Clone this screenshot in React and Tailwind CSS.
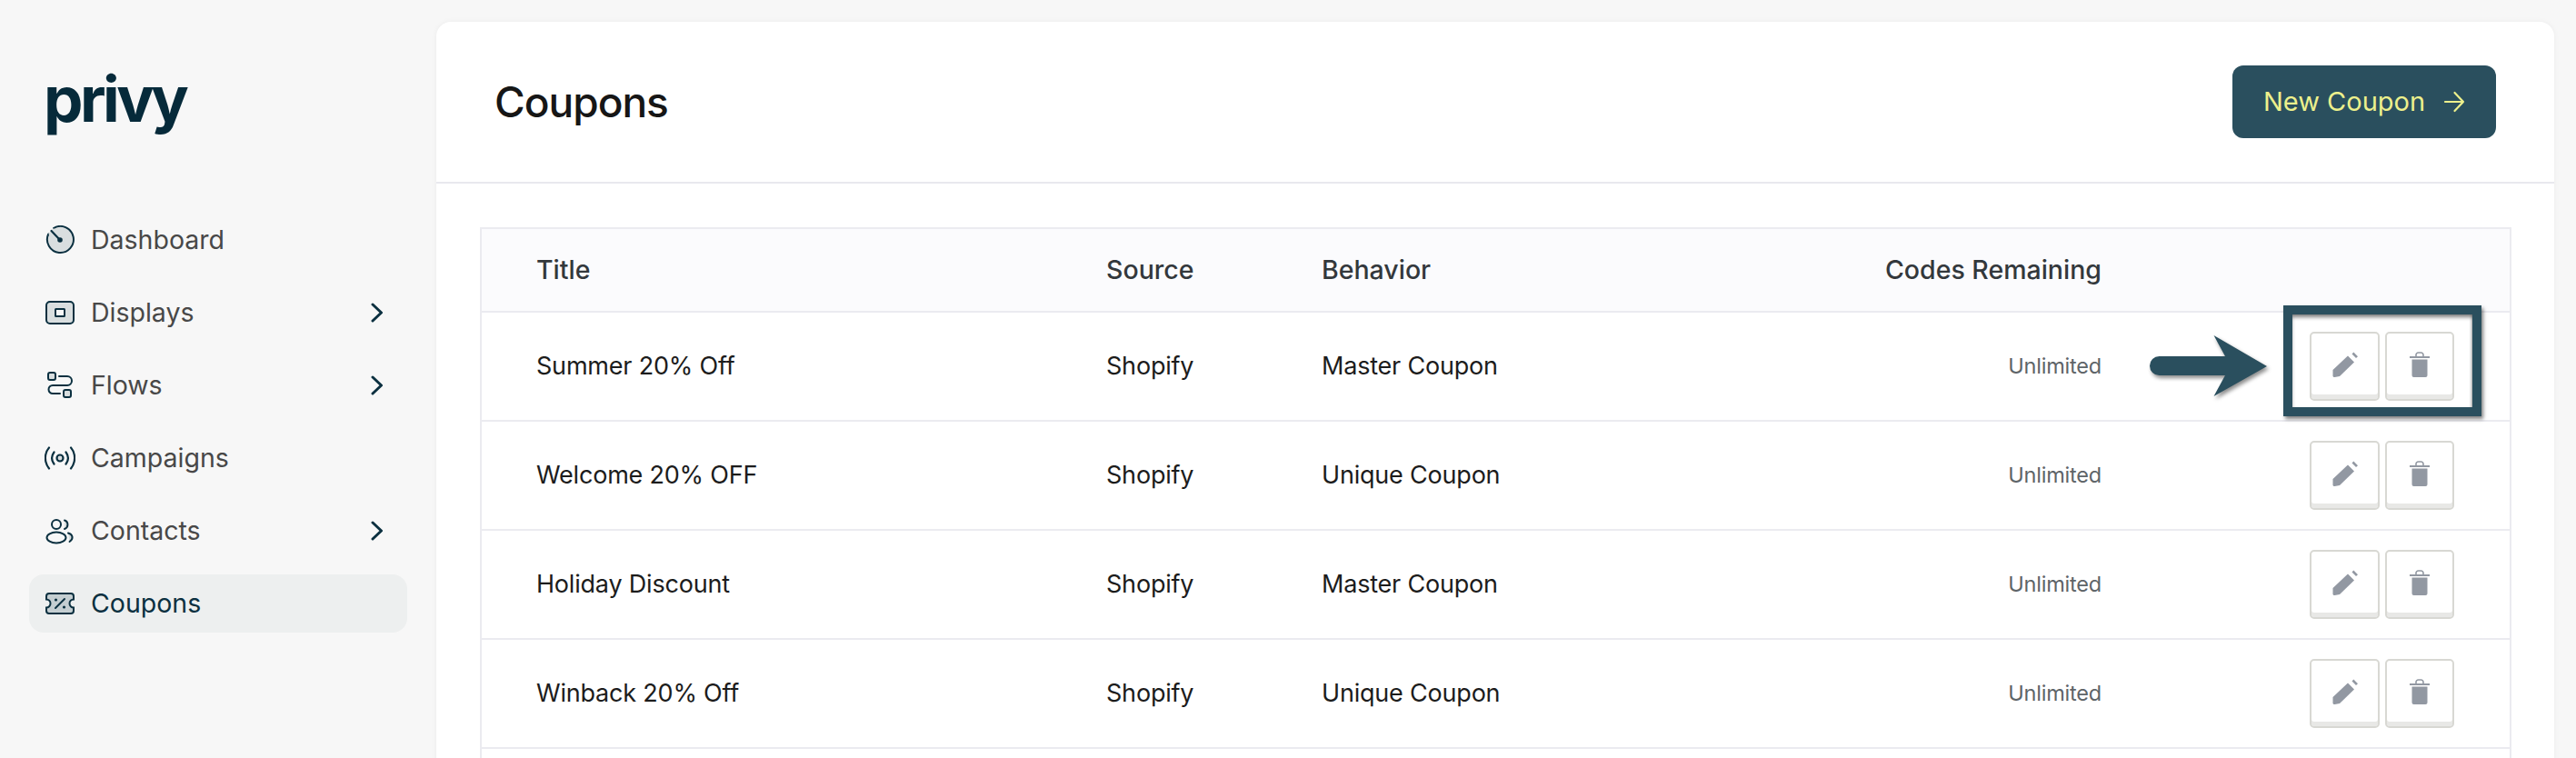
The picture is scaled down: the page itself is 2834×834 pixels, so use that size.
const F = { fontFamily: 'Inter, "Liberation Sans", sans-serif' };

function Dash() {
  return (
    <svg width="32" height="32" viewBox="0 0 32 32" fill="none" stroke="#0b3040" strokeWidth="2" strokeLinecap="round">
      <path d="M9 3A14.500 14.500 0 1 1 3.200 9.500" fill="#d9dedf" />
      <path d="M3.200 9.500 16 16 9 3Z" fill="#d9dedf" stroke="none" />
      <path d="M6.500 6 16 16" strokeWidth="2.200" />
      <circle cx="16" cy="16" r="2.800" fill="#0b3040" stroke="none" />
    </svg>
  );
}
function Disp() {
  return (
    <svg width="32" height="32" viewBox="0 0 32 32" fill="none" stroke="#0b3040" strokeWidth="2">
      <rect x="1" y="4" width="30" height="24" rx="4" fill="#d9dedf" />
      <rect x="11" y="12" width="10" height="8" rx="0.500" fill="#f7f7f7" />
    </svg>
  );
}
function Flow() {
  return (
    <svg width="32" height="32" viewBox="0 0 32 32" fill="none" stroke="#0b3040" strokeWidth="2" strokeLinecap="round">
      <rect x="3" y="2" width="8" height="8" rx="2" fill="#d9dedf" />
      <rect x="20" y="21" width="8" height="8" rx="2" fill="#d9dedf" />
      <path d="M15 6h9a4.500 4.500 0 0 1 0 10H8a4.500 4.500 0 0 0 0 9h8" />
    </svg>
  );
}
function Camp() {
  return (
    <svg width="34" height="32" viewBox="0 0 34 32" fill="none" stroke="#0b3040" strokeWidth="2.200" strokeLinecap="round">
      <circle cx="17" cy="16" r="3.500" fill="#d9dedf" />
      <path d="M10.500 9.500c-3 4-3 9 0 13M23.500 9.500c3 4 3 9 0 13M5 4.500c-5.500 6.500-5.500 16 0 23M29 4.500c5.500 6.500 5.500 16 0 23" />
    </svg>
  );
}
function Cont() {
  return (
    <svg width="32" height="32" viewBox="0 0 32 32" fill="none" stroke="#0b3040" strokeWidth="2" strokeLinecap="round">
      <path d="M21 4.500a5 5 0 0 1 0 9.500Z" fill="#d9dedf" stroke="none" />
      <path d="M25 18.500c5 1.500 6.500 6 1.500 9.500Z" fill="#d9dedf" stroke="none" />
      <circle cx="12" cy="9" r="5" />
      <ellipse cx="12" cy="23.500" rx="10.500" ry="6" />
      <path d="M21 4.500a5 5 0 0 1 0 9.500M25 18.500c5 1.500 6.500 6 1.500 9.500" />
    </svg>
  );
}
function Coup() {
  return (
    <svg width="32" height="32" viewBox="0 0 32 32" fill="none" stroke="#0b3040" strokeWidth="2" strokeLinecap="round">
      <path d="M4 5h24a3 3 0 0 1 3 3v3.500a4.500 4.500 0 0 0 0 9V24a3 3 0 0 1-3 3H4a3 3 0 0 1-3-3v-3.500a4.500 4.500 0 0 0 0-9V8a3 3 0 0 1 3-3Z" fill="#c4ced1" />
      <path d="M11 21 21 11" />
      <circle cx="11.500" cy="12" r="1.600" fill="#0b3040" stroke="none" />
      <circle cx="20.500" cy="20" r="1.600" fill="#0b3040" stroke="none" />
    </svg>
  );
}
function Chev() {
  return (
    <svg width="14" height="22" viewBox="0 0 14 22" fill="none" stroke="#0b3040" strokeWidth="3" strokeLinecap="round" strokeLinejoin="round">
      <path d="M2 2l9.500 9L2 20" />
    </svg>
  );
}
function Pencil() {
  return (
    <svg width="28" height="28" viewBox="0 0 28 28" fill="#9298a2">
      <path d="M0.500 20 17 4.500 24 11.500 8 27 2.500 28H1.500L0.500 27Z" />
      <path d="M21.500 2.500 23.300 0.500 28 5.200 26 7Z" />
    </svg>
  );
}
function Trash() {
  return (
    <svg width="22" height="28" viewBox="0 0 22 28" fill="#9298a2">
      <rect x="0" y="5" width="22" height="2" />
      <path d="M7 5V3.500A2.500 2.500 0 0 1 9.500 1h3A2.500 2.500 0 0 1 15 3.500V5" fill="none" stroke="#9298a2" strokeWidth="1.600" />
      <path d="M2.500 8.500h17V26a2 2 0 0 1-2 2h-13a2 2 0 0 1-2-2Z" />
    </svg>
  );
}
function ArrowCallout() {
  return (
    <svg width="130" height="68" viewBox="0 0 130 68" className="overflow-visible" style={{ filter: 'drop-shadow(2px 3px 2px rgba(0,0,0,.45))' }}>
      <path d="M70.500 0 129 34 70.500 67 83 44H10.500a10.500 10.500 0 0 1 0-21H83Z" fill="#2a4f5e" />
    </svg>
  );
}

const nav = [
  ['Dashboard', Dash, false],
  ['Displays', Disp, true],
  ['Flows', Flow, true],
  ['Campaigns', Camp, false],
  ['Contacts', Cont, true],
];

const rows = [
  ['Summer 20% Off', 'Master Coupon'],
  ['Welcome 20% OFF', 'Unique Coupon'],
  ['Holiday Discount', 'Master Coupon'],
  ['Winback 20% Off', 'Unique Coupon'],
  ['', ''],
];

function IconBtn({ children, w }) {
  return (
    <div className={`${w} h-[76px] rounded-[5px] border-2 border-[#d8d8d3] bg-white flex items-center justify-center shadow-[inset_0_-5px_0_#e8e8e6] pb-[4px]`}>
      {children}
    </div>
  );
}

export default function App() {
  return (
    <div className="h-[834px] w-[2834px] overflow-hidden bg-[#f7f7f7] flex" style={F}>
      <aside className="w-[480px] shrink-0 pl-[32px] pr-[32px] flex flex-col">
        <div className="h-[200px] pl-[16px] pt-[69px]">
          <div className="text-[69px] leading-[80px] font-bold tracking-[-3.500px] text-[#062a3a]">privy</div>
        </div>
        <nav className="mt-[32px] flex flex-col">
          {nav.map(([label, Icon, more]) => (
            <div key={label} className="h-[64px] mb-[16px] pl-[17px] pr-[26px] flex items-center text-[#484848]">
              <span className="w-[34px] flex justify-center"><Icon /></span>
              <span className="ml-[17px] text-[28.5px] flex-1">{label}</span>
              {more && <Chev />}
            </div>
          ))}
          <div className="h-[64px] pl-[17px] rounded-[16px] bg-[#edefef] flex items-center text-[#0b3040]">
            <span className="w-[34px] flex justify-center"><Coup /></span>
            <span className="ml-[17px] text-[28.5px]">Coupons</span>
          </div>
        </nav>
      </aside>

      <main className="mt-[24px] w-[2330px] shrink-0 h-[900px] bg-white rounded-t-[16px] shadow-[0_0_6px_rgba(0,0,0,.05)]">
        <header className="h-[178px] border-b-2 border-[#e8e8ee] pl-[64px] pr-[64px] flex items-center justify-between">
          <h1 className="text-[46px] font-medium tracking-[-1px] text-[#161616]">Coupons</h1>
          <button className="w-[290px] h-[80px] rounded-[12px] bg-[#2a4f5e] text-[#edf08c] text-[29px] flex items-center justify-center gap-[20px]">
            New Coupon
            <svg width="24" height="24" viewBox="0 0 24 24" fill="none" stroke="#edf08c" strokeWidth="2.200" strokeLinecap="round" strokeLinejoin="round">
              <path d="M2 12h20M12.500 2 22 12 12.500 22" />
            </svg>
          </button>
        </header>

        <div className="mt-[48px] ml-[48px] w-[2235px] border-2 border-[#ebebf0]">
          <div className="h-[92px] bg-[#fbfbfd] border-b-2 border-[#ebebf0] flex items-center text-[28.5px] font-medium text-[#33383c]">
            <span className="ml-[60px] w-[627px]">Title</span>
            <span className="w-[237px]">Source</span>
            <span className="w-[500px]">Behavior</span>
            <span className="w-[358px] text-right">Codes Remaining</span>
          </div>
          {rows.map(([title, behavior], i) => (
            <div key={i} className="h-[120px] border-b-2 border-[#ebebf0] flex items-center text-[27px] tracking-[-0.2px] text-[#1c1c1c]">
              <span className="ml-[60px] w-[627px]">{title}</span>
              <span className="w-[237px]">{title && 'Shopify'}</span>
              <span className="w-[500px]">{behavior}</span>
              <span className="w-[358px] text-right text-[23.5px] text-[#5e6468]">{title && 'Unlimited'}</span>
              {title && (
                <div className="relative ml-[229px] flex gap-[6px]">
                  <IconBtn w="w-[77px]"><Pencil /></IconBtn>
                  <IconBtn w="w-[76px]"><Trash /></IconBtn>
                  {i === 0 && (
                    <>
                      <div className="absolute left-[-29px] top-[-29px] w-[218px] h-[122px] border-[10px] border-[#2a4f5e] shadow-[2px_3px_4px_rgba(0,0,0,.5),inset_0_4px_4px_-1px_rgba(0,0,0,.5),inset_-2px_0_3px_-1px_rgba(0,0,0,.25)]" />
                      <div className="absolute left-[-176px] top-[4px]"><ArrowCallout /></div>
                    </>
                  )}
                </div>
              )}
            </div>
          ))}
        </div>
      </main>
    </div>
  );
}
